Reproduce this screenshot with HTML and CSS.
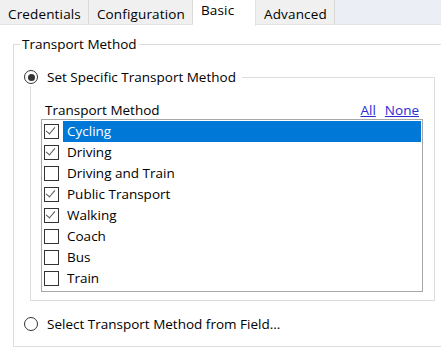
FILE: index.html
```html
<!DOCTYPE html>
<html>
  <head>
    <title>Transport Method</title>
    <link rel="stylesheet" href="styles.css">
  </head>
  <body>
    <div class="tabs">
      <div class="tab">Credentials</div>
      <div class="tab">Configuration</div>
      <div class="tab active">Basic</div>
      <div class="tab">Advanced</div>
    </div>
    <div class="page">
      <fieldset class="group">
        <legend>Transport Method</legend>
        <fieldset class="inner">
          <legend>
            <label class="radio"><span class="dot checked"></span>Set Specific Transport Method</label>
          </legend>
          <div class="list-head">
            <span>Transport Method</span>
            <span class="links"><a href="#">All</a><a href="#">None</a></span>
          </div>
          <div class="list">
            <div class="item selected"><span class="box on"></span><span class="name">Cycling</span></div>
            <div class="item"><span class="box on"></span><span class="name">Driving</span></div>
            <div class="item"><span class="box"></span><span class="name">Driving and Train</span></div>
            <div class="item"><span class="box on"></span><span class="name">Public Transport</span></div>
            <div class="item"><span class="box on"></span><span class="name">Walking</span></div>
            <div class="item"><span class="box"></span><span class="name">Coach</span></div>
            <div class="item"><span class="box"></span><span class="name">Bus</span></div>
            <div class="item"><span class="box"></span><span class="name">Train</span></div>
          </div>
        </fieldset>
        <label class="radio field"><span class="dot"></span>Select Transport Method from Field...</label>
      </fieldset>
    </div>
  </body>
</html>
```

FILE: styles.css
```css
body {
  margin: 0;
  font-family: "Open Sans", "Noto Sans", sans-serif;
  font-size: 13.5px;
  line-height: 18px;
  color: #000;
  background: #fff;
  overflow: hidden;
}
.tabs {
  display: flex;
  height: 24px;
  background: #eceef6;
  border-bottom: 1px solid #e3e3e3;
}
.tab {
  padding: 5px 7px 0 8px;
  background: #f0f0f0;
  border-right: 1px solid #d9d9d9;
  letter-spacing: 0.15px;
}
.tab.active {
  background: #fff;
  padding: 1px 8px 0 8px;
  min-width: 46px;
  height: 25px;
  border-right: 1px solid #e3e3e3;
}
.page {
  padding: 10px 0 0 13px;
}
.group {
  margin: 0;
  width: 440px;
  padding: 0 0 13px 0;
  border: 1px solid #dcdcdc;
  box-sizing: border-box;
}
.group > legend {
  padding: 0 2px;
  margin-left: 6px;
}
.inner {
  margin: 15px 0 0 16px;
  width: 405px;
  box-sizing: border-box;
  padding: 0 11px 8px 10px;
  border: 1px solid #dcdcdc;
}
.inner > legend {
  padding: 0 6px 0 0;
  margin-left: -17px;
}
.radio {
  display: flex;
  align-items: center;
  gap: 9px;
}
.dot {
  width: 12px;
  height: 12px;
  border: 1px solid #333;
  border-radius: 50%;
  display: inline-flex;
  align-items: center;
  justify-content: center;
}
.dot.checked::after {
  content: "";
  width: 7px;
  height: 7px;
  border-radius: 50%;
  background: #333;
}
.list-head {
  display: flex;
  justify-content: space-between;
  padding: 15px 4px 0 4px;
}
.links a {
  color: #2c2cd6;
  margin-left: 9px;
}
.list {
  border: 1px solid #a7a7a7;
  padding: 1px 1px 2px 2px;
}
.item {
  display: flex;
  align-items: center;
  height: 21px;
}
.box {
  width: 13px;
  height: 13px;
  border: 1px solid #333;
  margin-right: 4px;
  position: relative;
}
.box.on::after {
  content: "";
  position: absolute;
  left: 3px;
  top: 0px;
  width: 4px;
  height: 8px;
  border-right: 1.5px solid #555;
  border-bottom: 1.5px solid #555;
  transform: rotate(40deg);
}
.name {
  flex: 1;
  height: 21px;
  line-height: 21px;
  padding-left: 4px;
}
.item.selected .name {
  background: #0078d7;
  color: #fff;
}
.radio.field {
  margin: 14px 0 0 10px;
}
```
